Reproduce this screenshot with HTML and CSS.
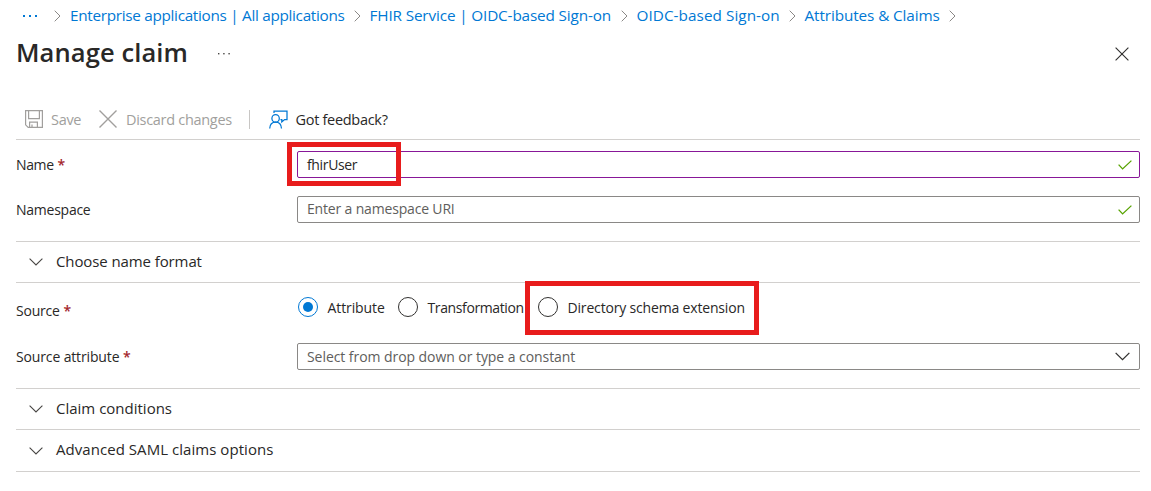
FILE: index.html
```html
<!DOCTYPE html>
<html lang="en">
<head>
<meta charset="utf-8">
<title>Manage claim</title>
<link rel="stylesheet" href="styles.css">
</head>
<body>
<main class="blade">
  <nav class="crumbs">
    <a class="crumb crumb-more"><svg width="16" height="4" viewBox="0 0 16 4" fill="#0078d4"><rect x="1" y="1" width="2" height="2"/><rect x="7" y="1" width="2" height="2"/><rect x="13" y="1" width="2" height="2"/></svg></a>
    <svg class="sep" viewBox="0 0 7 12"><path d="M.7.7 6 6 .7 11.3"/></svg>
    <a class="crumb crumb-apps">Enterprise applications | All applications</a>
    <svg class="sep" viewBox="0 0 7 12"><path d="M.7.7 6 6 .7 11.3"/></svg>
    <a class="crumb crumb-service">FHIR Service | OIDC-based Sign-on</a>
    <svg class="sep" viewBox="0 0 7 12"><path d="M.7.7 6 6 .7 11.3"/></svg>
    <a class="crumb crumb-signon">OIDC-based Sign-on</a>
    <svg class="sep" viewBox="0 0 7 12"><path d="M.7.7 6 6 .7 11.3"/></svg>
    <a class="crumb crumb-claims">Attributes &amp; Claims</a>
    <svg class="sep" viewBox="0 0 7 12"><path d="M.7.7 6 6 .7 11.3"/></svg>
  </nav>

  <header class="heading">
    <h1>Manage claim</h1>
    <svg class="more" width="14" height="4" viewBox="0 0 14 4" fill="#484644"><rect x="1" y="1" width="1.4" height="1.4"/><rect x="6.2" y="1" width="1.4" height="1.4"/><rect x="11.4" y="1" width="1.4" height="1.4"/></svg>
    <svg class="close" width="14" height="14" viewBox="0 0 14 14"><path d="m.6.6 12.8 12.8M13.4.6.6 13.4" fill="none" stroke="#323130" stroke-width="1.15"/></svg>
  </header>

  <div class="toolbar">
    <div class="tool tool-save disabled">
      <svg width="18" height="18" viewBox="0 0 18 18" fill="none" stroke="#a19f9d" stroke-width="1.2"><path d="M.6.6h16.8v16.8H3.2L.6 14.8zM3.6.6v8h10.8v-8M4.6 17.4v-5.2h7.8v5.2M7 17.4v-2.8"/></svg>
      <span>Save</span>
    </div>
    <div class="tool tool-discard disabled">
      <svg width="18" height="18" viewBox="0 0 18 18" fill="none" stroke="#a19f9d" stroke-width="1.4"><path d="m.5.5 17 17M17.5.5l-17 17"/></svg>
      <span>Discard changes</span>
    </div>
    <div class="divider"></div>
    <div class="tool tool-feedback">
      <svg width="19" height="19" viewBox="0 0 19 19" fill="none" stroke="#0078d4" stroke-width="1.25"><path d="M5 3V1h13v8.600h-2.400L12.800 12V9.600h-1.300"/><circle cx="6.600" cy="8.400" r="3.700"/><path d="M.7 18.500c.2-3.900 2.400-6.400 5.900-6.400s5.700 2.500 5.900 6.400"/></svg>
      <span>Got feedback?</span>
    </div>
  </div>

  <section class="form">
    <div class="row row-name">
      <label><span class="t-name">Name</span> <b>*</b></label>
      <div class="field active">
        <span class="t-user">fhirUser</span>
        <svg class="check" viewBox="0 0 14 10"><path d="m.6 4.600 4 4.300L13.400.6"/></svg>
        <i class="mark mark-name"></i>
      </div>
    </div>
    <div class="row row-namespace">
      <label><span class="t-namespace">Namespace</span></label>
      <div class="field">
        <span class="hint t-uri">Enter a namespace URI</span>
        <svg class="check" viewBox="0 0 14 10"><path d="m.6 4.600 4 4.300L13.400.6"/></svg>
      </div>
    </div>
  </section>

  <div class="fold">
    <svg class="chevron" viewBox="0 0 14 8"><path d="m.6.6 6.400 6.400L13.400.6"/></svg><span class="t-format">Choose name format</span>
  </div>

  <section class="form form-source">
    <div class="row row-source">
      <label><span class="t-source">Source</span> <b>*</b></label>
      <div class="radios">
        <div class="radio selected"><i class="dot"></i><span class="t-attribute">Attribute</span></div>
        <div class="radio"><i class="dot"></i><span class="t-transformation">Transformation</span></div>
        <div class="radio"><i class="dot"></i><span class="t-directory">Directory schema extension</span><i class="mark mark-directory"></i></div>
      </div>
    </div>
    <div class="row row-attribute">
      <label><span class="t-srcattr">Source attribute</span> <b>*</b></label>
      <div class="field select">
        <span class="hint t-select">Select from drop down or type a constant</span>
        <svg class="chevron" viewBox="0 0 14 8"><path d="m.6.6 6.400 6.400L13.400.6"/></svg>
      </div>
    </div>
  </section>

  <div class="fold">
    <svg class="chevron" viewBox="0 0 14 8"><path d="m.6.6 6.400 6.400L13.400.6"/></svg><span>Claim conditions</span>
  </div>
  <div class="fold fold-last">
    <svg class="chevron" viewBox="0 0 14 8"><path d="m.6.6 6.400 6.400L13.400.6"/></svg><span class="t-saml">Advanced SAML claims options</span>
  </div>
</main>
</body>
</html>
```
FILE: styles.css
```css
* { box-sizing: border-box; }
body {
  margin: 0;
  background: #fff;
  color: #292827;
  font: 14px/20px "Open Sans", "Noto Sans", sans-serif;
  white-space: nowrap;
}
svg { display: block; flex: none; }
.blade { width: 1151px; height: 491px; padding: 0 11px 0 16px; overflow: hidden; }

.crumbs { display: flex; align-items: center; height: 31px; padding-left: 6px; font-size: 15.3px; }
.crumb { flex: none; padding-bottom: 2px; color: #0078d4; }
.crumb-more { width: 32px; padding: 0; }
.crumb-apps { width: 283.5px; letter-spacing: -.3px; }
.crumb-service { width: 251px; letter-spacing: -.14px; }
.crumb-signon { width: 152px; letter-spacing: .05px; }
.crumb-claims { width: 144.5px; letter-spacing: -.1px; }
.sep { width: 7px; height: 12px; margin-right: 9px; fill: none; stroke: #8a8886; }

.heading { display: flex; align-items: center; height: 45px; }
h1 { width: 201px; margin: 0; padding-bottom: 4px; font-size: 25.5px; line-height: 34px; font-weight: 600; letter-spacing: .1px; }
.close { margin: 0 11px 0 auto; }

.toolbar { display: flex; align-items: center; height: 64px; padding: 23px 0 0 9px; border-bottom: 1px solid #d2d0ce; font-size: 14.5px; }
.tool { display: flex; align-items: center; gap: 9px; letter-spacing: -.3px; }
.tool span { padding-top: 1px; }
.tool-save { width: 74px; gap: 8px; }
.tool-discard { width: 150px; }
.tool-feedback { gap: 8px; }
.disabled { color: #a19f9d; }
.divider { width: 1px; height: 19px; margin-right: 18.5px; background: #c8c6c4; }

.form { padding-top: 11px; }
.row { display: flex; align-items: center; height: 27px; }
.row label { width: 281px; }
.row-name label { padding-top: 1px; }
.row b { color: #a4262c; font-weight: 600; }
.row-namespace { margin-top: 18px; }
.field { position: relative; display: flex; align-items: center; justify-content: space-between; width: 843px; height: 27px; padding: 0 7px 0 9px; border: 1px solid #8a8886; border-radius: 2px; }
.active { border-color: #881798; }
.hint { color: #605e5c; }
.check { width: 14px; height: 10px; fill: none; stroke: #57a300; stroke-width: 1.3; }
.chevron { width: 14px; height: 8px; fill: none; stroke: #484644; stroke-width: 1.1; }
.select .chevron { width: 15px; height: 9px; margin-right: 2px; stroke: #323130; stroke-width: 1.2; }

.fold { display: flex; align-items: center; gap: 13px; width: 1124px; height: 41px; padding-left: 13px; border-top: 1px solid #d2d0ce; font-size: 15px; }
.form + .fold { margin-top: 18px; }
.fold span { padding-bottom: 2px; }
.fold-last { height: 43px; border-bottom: 1px solid #d2d0ce; }
.fold-last span { padding-bottom: 3px; }

.form-source { padding-top: 14px; border-top: 1px solid #d2d0ce; }
.radios { display: flex; padding-left: 1px; }
.radio { position: relative; display: flex; align-items: center; gap: 9.5px; height: 20px; margin-bottom: 7px; }
.radio span { padding-top: 2px; }
.dot { width: 20px; height: 20px; flex: none; border: 1px solid #323130; border-radius: 50%; }
.selected .dot { padding: 4px; border-color: #0078d4; background: #0078d4 content-box; }
.radio:nth-child(1) { width: 100px; }
.radio:nth-child(2) { width: 140px; }
.row-attribute { margin-top: 19px; }

/* Tracking per label */
.t-name, .t-user { letter-spacing: -.35px; }
.t-namespace { letter-spacing: -.25px; }
.t-uri { padding-bottom: 1px; letter-spacing: -.17px; }
.t-format { letter-spacing: -.1px; }
.t-source { letter-spacing: -.2px; }
.t-attribute { letter-spacing: -.1px; }
.t-transformation { letter-spacing: -.38px; }
.t-directory { letter-spacing: -.17px; }
.t-srcattr { letter-spacing: -.14px; }
.t-select { letter-spacing: -.06px; }
.t-saml { letter-spacing: .05px; }

.mark { position: absolute; border: 5px solid #e81c1c; }
.mark-name { left: -11px; top: -10px; width: 114px; height: 44px; }
.mark-directory { left: -13px; top: -16px; width: 234px; height: 54px; }
```
